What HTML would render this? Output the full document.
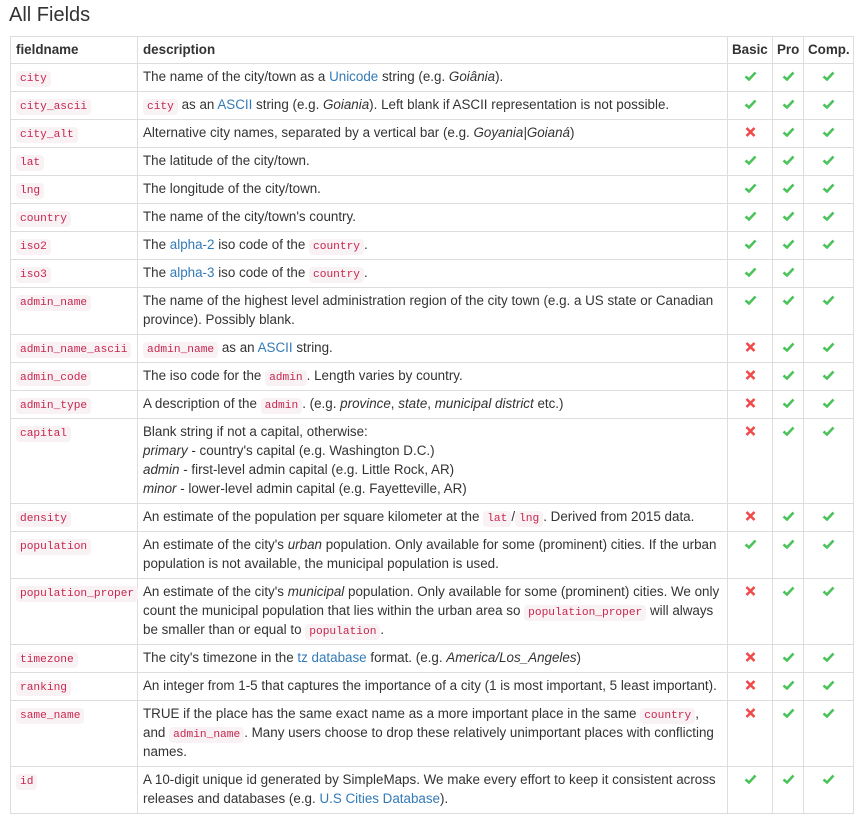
<!DOCTYPE html>
<html><head><meta charset="utf-8"><style>
body{margin:0;background:#fff;font-family:"Liberation Sans",Arial,sans-serif;font-size:13.4px;color:#333;}
h3{font-size:20px;font-weight:normal;margin:0;position:absolute;left:9px;top:3px;line-height:24px;color:#333}
table{position:absolute;left:10px;top:36px;border-collapse:collapse;table-layout:fixed;width:843px}
td,th{border:1px solid #ddd;padding:3px 4px 5px 5px;height:19px;line-height:19px;vertical-align:top;text-align:left}
th{font-weight:bold;padding:3px 4px 4px 5px;line-height:19px}
code{font-family:"Liberation Mono",monospace;font-size:11.2px;line-height:1;color:#c7254e;background:#f9f2f4;padding:2px 4px;border-radius:4px}
a{color:#337ab7;text-decoration:none}
td.c{text-align:center;padding-left:0;padding-right:0}
.y,.n{display:inline-block;width:13px;height:12px;vertical-align:-1px}
</style></head><body>
<h3>All Fields</h3>
<svg width="0" height="0" style="position:absolute"><defs>
<symbol id="y" viewBox="0 0 13 12"><path d="M1.5 6.5 L5 9.5 L11.5 2.5" stroke="#4cc35a" stroke-width="2.6" fill="none"/></symbol>
<symbol id="n" viewBox="0 0 13 12"><path d="M2.5 2 L10.5 10 M10.5 2 L2.5 10" stroke="#f04a4a" stroke-width="2.6" fill="none"/></symbol>
</defs></svg>
<table>
<colgroup><col style="width:127px"><col style="width:590px"><col style="width:45px"><col style="width:31px"><col style="width:50px"></colgroup>
<tr><th>fieldname</th><th>description</th><th style="padding-left:4px">Basic</th><th style="padding-left:4px">Pro</th><th style="padding-left:4px">Comp.</th></tr>
<tr><td><code>city</code></td><td>The name of the city/town as a <a>Unicode</a> string (e.g. <i>Goiânia</i>).</td><td class="c"><svg class="y"><use href="#y"/></svg></td><td class="c"><svg class="y"><use href="#y"/></svg></td><td class="c"><svg class="y"><use href="#y"/></svg></td></tr>
<tr><td><code>city_ascii</code></td><td><code>city</code> as an <a>ASCII</a> string (e.g. <i>Goiania</i>). Left blank if ASCII representation is not possible.</td><td class="c"><svg class="y"><use href="#y"/></svg></td><td class="c"><svg class="y"><use href="#y"/></svg></td><td class="c"><svg class="y"><use href="#y"/></svg></td></tr>
<tr><td><code>city_alt</code></td><td>Alternative city names, separated by a vertical bar (e.g. <i>Goyania|Goianá</i>)</td><td class="c"><svg class="n"><use href="#n"/></svg></td><td class="c"><svg class="y"><use href="#y"/></svg></td><td class="c"><svg class="y"><use href="#y"/></svg></td></tr>
<tr><td><code>lat</code></td><td>The latitude of the city/town.</td><td class="c"><svg class="y"><use href="#y"/></svg></td><td class="c"><svg class="y"><use href="#y"/></svg></td><td class="c"><svg class="y"><use href="#y"/></svg></td></tr>
<tr><td><code>lng</code></td><td>The longitude of the city/town.</td><td class="c"><svg class="y"><use href="#y"/></svg></td><td class="c"><svg class="y"><use href="#y"/></svg></td><td class="c"><svg class="y"><use href="#y"/></svg></td></tr>
<tr><td><code>country</code></td><td>The name of the city/town's country.</td><td class="c"><svg class="y"><use href="#y"/></svg></td><td class="c"><svg class="y"><use href="#y"/></svg></td><td class="c"><svg class="y"><use href="#y"/></svg></td></tr>
<tr><td><code>iso2</code></td><td>The <a>alpha-2</a> iso code of the <code>country</code>.</td><td class="c"><svg class="y"><use href="#y"/></svg></td><td class="c"><svg class="y"><use href="#y"/></svg></td><td class="c"><svg class="y"><use href="#y"/></svg></td></tr>
<tr><td><code>iso3</code></td><td>The <a>alpha-3</a> iso code of the <code>country</code>.</td><td class="c"><svg class="y"><use href="#y"/></svg></td><td class="c"><svg class="y"><use href="#y"/></svg></td><td class="c"></td></tr>
<tr><td><code>admin_name</code></td><td>The name of the highest level administration region of the city town (e.g. a US state or Canadian province). Possibly blank.</td><td class="c"><svg class="y"><use href="#y"/></svg></td><td class="c"><svg class="y"><use href="#y"/></svg></td><td class="c"><svg class="y"><use href="#y"/></svg></td></tr>
<tr><td><code>admin_name_ascii</code></td><td><code>admin_name</code> as an <a>ASCII</a> string.</td><td class="c"><svg class="n"><use href="#n"/></svg></td><td class="c"><svg class="y"><use href="#y"/></svg></td><td class="c"><svg class="y"><use href="#y"/></svg></td></tr>
<tr><td><code>admin_code</code></td><td>The iso code for the <code>admin</code>. Length varies by country.</td><td class="c"><svg class="n"><use href="#n"/></svg></td><td class="c"><svg class="y"><use href="#y"/></svg></td><td class="c"><svg class="y"><use href="#y"/></svg></td></tr>
<tr><td><code>admin_type</code></td><td>A description of the <code>admin</code>. (e.g. <i>province</i>, <i>state</i>, <i>municipal district</i> etc.)</td><td class="c"><svg class="n"><use href="#n"/></svg></td><td class="c"><svg class="y"><use href="#y"/></svg></td><td class="c"><svg class="y"><use href="#y"/></svg></td></tr>
<tr><td><code>capital</code></td><td>Blank string if not a capital, otherwise:<br><i>primary</i> - country's capital (e.g. Washington D.C.)<br><i>admin</i> - first-level admin capital (e.g. Little Rock, AR)<br><i>minor</i> - lower-level admin capital (e.g. Fayetteville, AR)</td><td class="c"><svg class="n"><use href="#n"/></svg></td><td class="c"><svg class="y"><use href="#y"/></svg></td><td class="c"><svg class="y"><use href="#y"/></svg></td></tr>
<tr><td><code>density</code></td><td>An estimate of the population per square kilometer at the <code>lat</code>/<code>lng</code>. Derived from 2015 data.</td><td class="c"><svg class="n"><use href="#n"/></svg></td><td class="c"><svg class="y"><use href="#y"/></svg></td><td class="c"><svg class="y"><use href="#y"/></svg></td></tr>
<tr><td><code>population</code></td><td>An estimate of the city's <i>urban</i> population. Only available for some (prominent) cities. If the urban population is not available, the municipal population is used.</td><td class="c"><svg class="y"><use href="#y"/></svg></td><td class="c"><svg class="y"><use href="#y"/></svg></td><td class="c"><svg class="y"><use href="#y"/></svg></td></tr>
<tr><td><code>population_proper</code></td><td>An estimate of the city's <i>municipal</i> population. Only available for some (prominent) cities. We only<br>count the municipal population that lies within the urban area so <code>population_proper</code> will always<br>be smaller than or equal to <code>population</code>.</td><td class="c"><svg class="n"><use href="#n"/></svg></td><td class="c"><svg class="y"><use href="#y"/></svg></td><td class="c"><svg class="y"><use href="#y"/></svg></td></tr>
<tr><td><code>timezone</code></td><td>The city's timezone in the <a>tz database</a> format. (e.g. <i>America/Los_Angeles</i>)</td><td class="c"><svg class="n"><use href="#n"/></svg></td><td class="c"><svg class="y"><use href="#y"/></svg></td><td class="c"><svg class="y"><use href="#y"/></svg></td></tr>
<tr><td><code>ranking</code></td><td>An integer from 1-5 that captures the importance of a city (1 is most important, 5 least important).</td><td class="c"><svg class="n"><use href="#n"/></svg></td><td class="c"><svg class="y"><use href="#y"/></svg></td><td class="c"><svg class="y"><use href="#y"/></svg></td></tr>
<tr><td><code>same_name</code></td><td>TRUE if the place has the same exact name as a more important place in the same <code>country</code>,<br>and <code>admin_name</code>. Many users choose to drop these relatively unimportant places with conflicting names.</td><td class="c"><svg class="n"><use href="#n"/></svg></td><td class="c"><svg class="y"><use href="#y"/></svg></td><td class="c"><svg class="y"><use href="#y"/></svg></td></tr>
<tr><td><code>id</code></td><td>A 10-digit unique id generated by SimpleMaps. We make every effort to keep it consistent across<br>releases and databases (e.g. <a>U.S Cities Database</a>).</td><td class="c"><svg class="y"><use href="#y"/></svg></td><td class="c"><svg class="y"><use href="#y"/></svg></td><td class="c"><svg class="y"><use href="#y"/></svg></td></tr>
</table>
</body></html>
